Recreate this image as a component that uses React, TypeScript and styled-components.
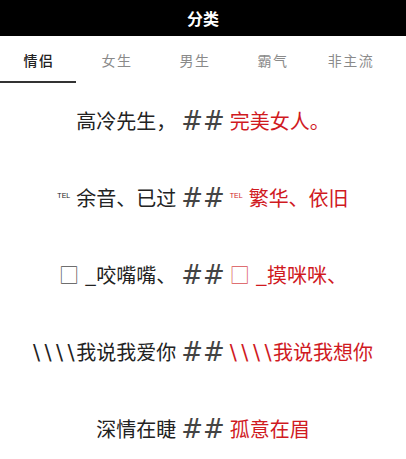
import React from "react";
import styled, { createGlobalStyle } from "styled-components";

const Global = createGlobalStyle`
  html, body { margin: 0; padding: 0; background: #fff; }
  body { font-family: "Noto Sans CJK SC", "Noto Sans", sans-serif; }
`;

const Page = styled.div`
  width: 406px;
  height: 459px;
  overflow: hidden;
  background: #fff;
  display: flex;
  flex-direction: column;
`;

const Header = styled.div`
  flex: 0 0 36px;
  background: #000;
  color: #fff;
  display: flex;
  align-items: center;
  justify-content: center;
  font-size: 16px;
  font-weight: 600;
`;

const Tabs = styled.div`
  flex: 0 0 47px;
  display: flex;
`;

const Tab = styled.div<{ $active?: boolean }>`
  width: 78px;
  flex-shrink: 0;
  display: flex;
  align-items: center;
  justify-content: center;
  font-size: 14px;
  color: ${(p) => (p.$active ? "#222" : "#8a8a8a")};
  font-weight: ${(p) => (p.$active ? 500 : 400)};
  letter-spacing: 1.5px;
  position: relative;
  ${(p) =>
    p.$active
      ? `&::after { content: ""; position: absolute; left: 0; bottom: 0; width: 76px; height: 2px; background: #333; }`
      : ""}
`;

const List = styled.div`
  display: flex;
  flex-direction: column;
  padding-top: 17px;
`;

const Line = styled.div`
  flex: 0 0 77px;
  display: flex;
  align-items: flex-start;
  justify-content: center;
  font-size: 20px;
  line-height: 42px;
  white-space: pre;
`;

const Left = styled.span`
  color: #222;
`;

const Right = styled.span`
  color: #d01a1f;
`;

const Hash = styled.span`
  color: #444;
  font-family: "DejaVu Sans", sans-serif;
  font-size: 26px;
  font-weight: 400;
  margin: 0 5px 0 5px;
`;

const Tel = styled.span`
  font-family: "Liberation Sans", sans-serif;
  font-size: 7px;
  vertical-align: 8px;
  margin-right: 6px;
  line-height: 1;
`;

const Slashes = styled.span`
  font-family: "DejaVu Sans", sans-serif;
  font-size: 21px;
  letter-spacing: 4.5px;
  margin-right: -3px;
`;

const Box = styled.span`
  font-weight: 300;
  opacity: 0.8;
  margin-right: 6px;
`;

const tabs = ["情侣", "女生", "男生", "霸气", "非主流"];

const rows: { l: React.ReactNode; r: React.ReactNode }[] = [
  { l: "高冷先生，", r: "完美女人。" },
  { l: <><Tel>TEL</Tel>余音、已过</>, r: <><Tel>TEL</Tel>繁华、依旧</> },
  { l: <><Box>□</Box>_咬嘴嘴、</>, r: <><Box>□</Box>_摸咪咪、</> },
  {
    l: <><Slashes>{"\\\\\\\\"}</Slashes>我说我爱你</>,
    r: <><Slashes>{"\\\\\\\\"}</Slashes>我说我想你</>,
  },
  { l: "深情在睫", r: "孤意在眉" },
];

export default function App() {
  return (
    <Page>
      <Global />
      <Header>分类</Header>
      <Tabs>
        {tabs.map((t, i) => (
          <Tab key={t} $active={i === 0}>{t}</Tab>
        ))}
      </Tabs>
      <List>
        {rows.map((r, i) => (
          <Line key={i}>
            <Left>{r.l}</Left>
            <Hash>##</Hash>
            <Right>{r.r}</Right>
          </Line>
        ))}
      </List>
    </Page>
  );
}
